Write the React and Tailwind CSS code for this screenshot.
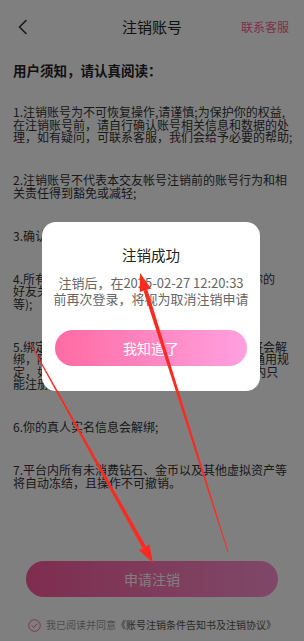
import React from 'react';

const paragraphs = [
  [
    '1.注销账号为不可恢复操作,请谨慎;为保护你的权益,',
    '在注销账号前，请自行确认账号相关信息和数据的处',
    '理，如有疑问，可联系客服，我们会给予必要的帮助;',
  ],
  ['2.注销账号不代表本交友帐号注销前的账号行为和相', '关责任得到豁免或减轻;'],
  ['3.确认注销后将无法找回账号信息;'],
  [
    '4.所有相关账号数据将被清空，包括但不限于你的',
    '好友关系、聊天记录、个人资料、动态、好友，',
    '等);',
  ],
  [
    '5.绑定的手机号、第三方账号等登录信息也都将会解',
    '绑，随后将按照本平台关于新账号注册的相关通用规',
    '定，如你使用相同的手机号重新注册，则30天内只',
    '能注册一个账号(不含已注销账号);',
  ],
  ['6.你的真人实名信息会解绑;'],
  ['7.平台内所有未消费钻石、金币以及其他虚拟资产等', '将自动冻结，且操作不可撤销。'],
];

function Arrows() {
  return (
    <svg className="pointer-events-none absolute inset-0" width="304" height="641" viewBox="0 0 304 641">
      <g fill="#ff2a1f">
        <polygon points="30.35,342.8 29.65,343.2 142.5,548.3 145.9,546.3" />
        <polygon points="153,563 139,550.2 149.4,544.4" />
        <polygon points="228.4,551.9 227.6,552.1 143.5,290.8 147.3,289.6" />
        <polygon points="140,273 151.1,288.4 139.7,292" />
      </g>
    </svg>
  );
}

export default function App() {
  return (
    <div className="relative h-[641px] w-[304px] overflow-hidden bg-white font-['Noto_Sans_CJK_SC',sans-serif] text-[#333]">
      <div className="flex h-full flex-col">
        <div className="grid h-[54px] grid-cols-[1fr_auto_1fr] items-center">
          <div className="pl-[17px]">
            <svg width="12" height="16" viewBox="0 0 12 16" fill="none">
              <polyline points="9,1.5 2.5,8 9,14.5" stroke="#333" strokeWidth="1.6" strokeLinecap="round" strokeLinejoin="round" />
            </svg>
          </div>
          <div className="text-[15px] leading-[20px] text-[#222]">注销账号</div>
          <div className="pr-[15px] text-right text-[12px] leading-[16px] text-[#ff5c94]">联系客服</div>
        </div>

        <div className="mt-[6px] px-[13px] text-[13.5px] font-bold leading-[20px] text-[#222]">
          用户须知，请认真阅读：
        </div>

        <div className="mt-[26px] flex flex-col gap-[30.5px] px-[13px]">
          {paragraphs.map((lines, i) => (
            <p key={i} className="whitespace-nowrap text-[12px] leading-[12.5px]">
              {lines.map((l, j) => (
                <span key={j} className="block">
                  {l}
                </span>
              ))}
            </p>
          ))}
        </div>

        <div className="mt-auto">
          <div className="mx-[26px] flex h-[36px] items-center justify-center rounded-full bg-linear-to-r from-[#ff5a9e] to-[#ff90d0] text-[14px] text-white">
            申请注销
          </div>
          <div className="mb-[9px] mt-[21px] flex items-center justify-center gap-[5px] text-[10px] leading-[14px]">
            <svg width="13" height="13" viewBox="0 0 13 13" fill="none">
              <circle cx="6.5" cy="6.5" r="5.8" stroke="#ff6a9e" strokeWidth="1" />
              <polyline points="3.8,6.6 5.8,8.5 9.3,4.8" stroke="#ff6a9e" strokeWidth="1" strokeLinecap="round" strokeLinejoin="round" />
            </svg>
            <span>
              <span className="text-[#999]">我已阅读并同意</span>
              <span className="text-[#555]">《账号注销条件告知书及注销协议》</span>
            </span>
          </div>
        </div>
      </div>

      <div className="absolute inset-0 bg-black/50" />

      <div className="absolute left-[42px] top-[222px] h-[169px] w-[218px] rounded-[14px] bg-white pt-[23px] text-center">
        <div className="text-[14.5px] font-normal leading-[20px] text-[#222]">注销成功</div>
        <div className="mt-[10px] text-[13px] leading-[16px] text-[#666]">
          <div>注销后，在2025-02-27 12:20:33</div>
          <div>前再次登录，将视为取消注销申请</div>
        </div>
        <div className="mx-[13px] mt-[23px] flex h-[36px] items-center justify-center rounded-full bg-linear-to-r from-[#ff6aa3] to-[#ffa0e0] text-[14px] text-white">
          我知道了
        </div>
      </div>

      <Arrows />
    </div>
  );
}
